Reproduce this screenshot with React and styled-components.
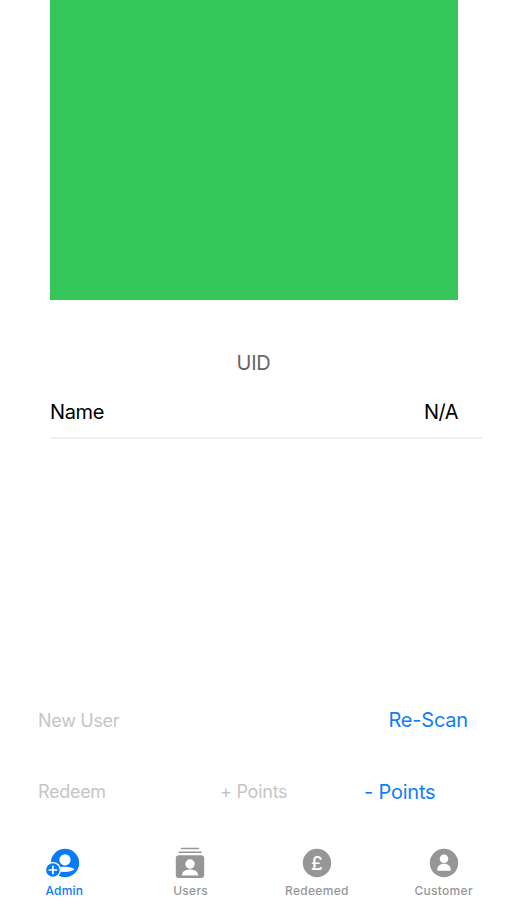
import React from 'react';
import styled, { createGlobalStyle } from 'styled-components';

const GlobalStyle = createGlobalStyle`
  * { box-sizing: border-box; }
  html, body { margin: 0; background: #fff; }
  body { font-family: Inter, "Liberation Sans", sans-serif; overflow: hidden; }
`;

const Screen = styled.div`
  width: 507px;
  height: 900px;
  display: flex;
  flex-direction: column;
  background: #fff;
`;

const Scanner = styled.div`
  flex: none;
  width: 408px;
  height: 300px;
  margin-left: 50px;
  background: #35c759;
`;

const Heading = styled.h1`
  margin: 51px 0 0;
  font-size: 20px;
  font-weight: 400;
  line-height: 24px;
  letter-spacing: -0.2px;
  text-align: center;
  color: #666;
`;

const DetailRow = styled.div`
  display: flex;
  justify-content: space-between;
  width: 432px;
  height: 52px;
  margin: 12px 0 0 50px;
  padding: 13px 24px 0 0;
  border-bottom: 2px solid #f1f1f2;
  font-size: 20px;
  line-height: 24px;
  color: #000;
`;

const Value = styled.span`
  letter-spacing: ${(p) => p.$tracking}px;
`;

const Actions = styled.div`
  display: grid;
  grid-template-columns: 182px 144px 1fr;
  grid-template-rows: 72px 48px;
  margin-top: auto;
  padding: 0 39px 0 38px;
`;

const Action = styled.button`
  padding: 0;
  border: 0;
  background: none;
  align-self: start;
  justify-self: ${(p) => (p.$end ? 'end' : 'start')};
  grid-column: ${(p) => p.$column};
  margin-top: ${(p) => p.$drop || 0}px;
  font-family: inherit;
  font-size: ${(p) => (p.disabled ? 18 : 20)}px;
  letter-spacing: ${(p) => p.$tracking}px;
  line-height: 24px;
  white-space: nowrap;
  color: ${(p) => (p.disabled ? '#c5c5c6' : '#0f7df7')};
`;

const TabBar = styled.nav`
  display: grid;
  grid-template-columns: repeat(4, 1fr);
  height: 72px;
  padding-top: 18px;
`;

const Tab = styled.a`
  display: flex;
  flex-direction: column;
  align-items: center;
  color: ${(p) => (p.$active ? '#0a7bf7' : '#969696')};
`;

const TabIcon = styled.svg`
  display: block;
  width: 36px;
  height: 34px;
`;

const TabLabel = styled.span`
  margin-top: 4px;
  padding-left: ${(p) => p.$inset || 0}px;
  font-size: 12px;
  font-weight: 500;
  line-height: 14px;
  letter-spacing: ${(p) => p.$tracking}px;
`;

const CurrencySign = styled.text`
  font-family: Inter, sans-serif;
  font-size: 19px;
  font-weight: 500;
  text-anchor: middle;
  fill: #fff;
`;

const AdminIcon = () => (
  <TabIcon viewBox="0 0 36 34">
    <circle cx="20" cy="17" r="14.2" fill="currentColor" />
    <circle cx="20" cy="13.8" r="5.6" fill="#fff" />
    <path d="M10 25.6c1.2-3.5 4.6-4.9 10-4.9 4.6 0 7.8.9 9.4 2.8-2.4 1.7-5.3 2.4-9.4 2.4z" fill="#fff" />
    <circle cx="7.9" cy="24" r="8.1" fill="#fff" />
    <circle cx="7.9" cy="24" r="6.8" fill="currentColor" />
    <path d="M7.9 19.7v8.6M3.6 24h8.6" stroke="#fff" strokeWidth="1.7" />
  </TabIcon>
);

const UsersIcon = () => (
  <TabIcon viewBox="0 0 36 34">
    <path d="M9.5 2.5h17M7 6.2h22" stroke="currentColor" strokeWidth="1.6" strokeLinecap="round" />
    <rect x="3.8" y="9.2" width="28.4" height="22.8" rx="3.2" fill="currentColor" />
    <circle cx="18" cy="18" r="4.7" fill="#fff" />
    <path d="M9.8 29.4c0-3.8 3.5-6 8.2-6s8.2 2.2 8.2 6z" fill="#fff" />
  </TabIcon>
);

const RedeemedIcon = () => (
  <TabIcon viewBox="0 0 36 34">
    <circle cx="18" cy="17" r="14.2" fill="currentColor" />
    <CurrencySign x="18" y="23.8">£</CurrencySign>
  </TabIcon>
);

const CustomerIcon = () => (
  <TabIcon viewBox="0 0 36 34">
    <circle cx="18" cy="17" r="14.2" fill="currentColor" />
    <circle cx="18" cy="12.7" r="4.3" fill="#fff" />
    <path d="M11.2 24.7c0-5 2.6-7 6.8-7s6.8 2 6.8 7z" fill="#fff" />
  </TabIcon>
);

const tabs = [
  { label: 'Admin', Icon: AdminIcon, active: true, tracking: 0.2, inset: 2 },
  { label: 'Users', Icon: UsersIcon, tracking: 0.3, inset: 1 },
  { label: 'Redeemed', Icon: RedeemedIcon, tracking: 0.3 },
  { label: 'Customer', Icon: CustomerIcon, tracking: 0.3 },
];

export default function App() {
  return (
    <Screen>
      <GlobalStyle />
      <Scanner />
      <Heading>UID</Heading>
      <DetailRow>
        <Value $tracking={-0.35}>Name</Value>
        <Value $tracking={-0.5}>N/A</Value>
      </DetailRow>
      <Actions>
        <Action disabled $column={1} $drop={1} $tracking={-0.3}>New User</Action>
        <Action $column={3} $end $tracking={-0.2}>Re-Scan</Action>
        <Action disabled $column={1} $tracking={-0.3}>Redeem</Action>
        <Action disabled $column={2} $tracking={-0.25}>+ Points</Action>
        <Action $column={3} $tracking={-0.2}>- Points</Action>
      </Actions>
      <TabBar>
        {tabs.map(({ label, Icon, active, tracking, inset }) => (
          <Tab key={label} $active={active}>
            <Icon />
            <TabLabel $tracking={tracking} $inset={inset}>{label}</TabLabel>
          </Tab>
        ))}
      </TabBar>
    </Screen>
  );
}
